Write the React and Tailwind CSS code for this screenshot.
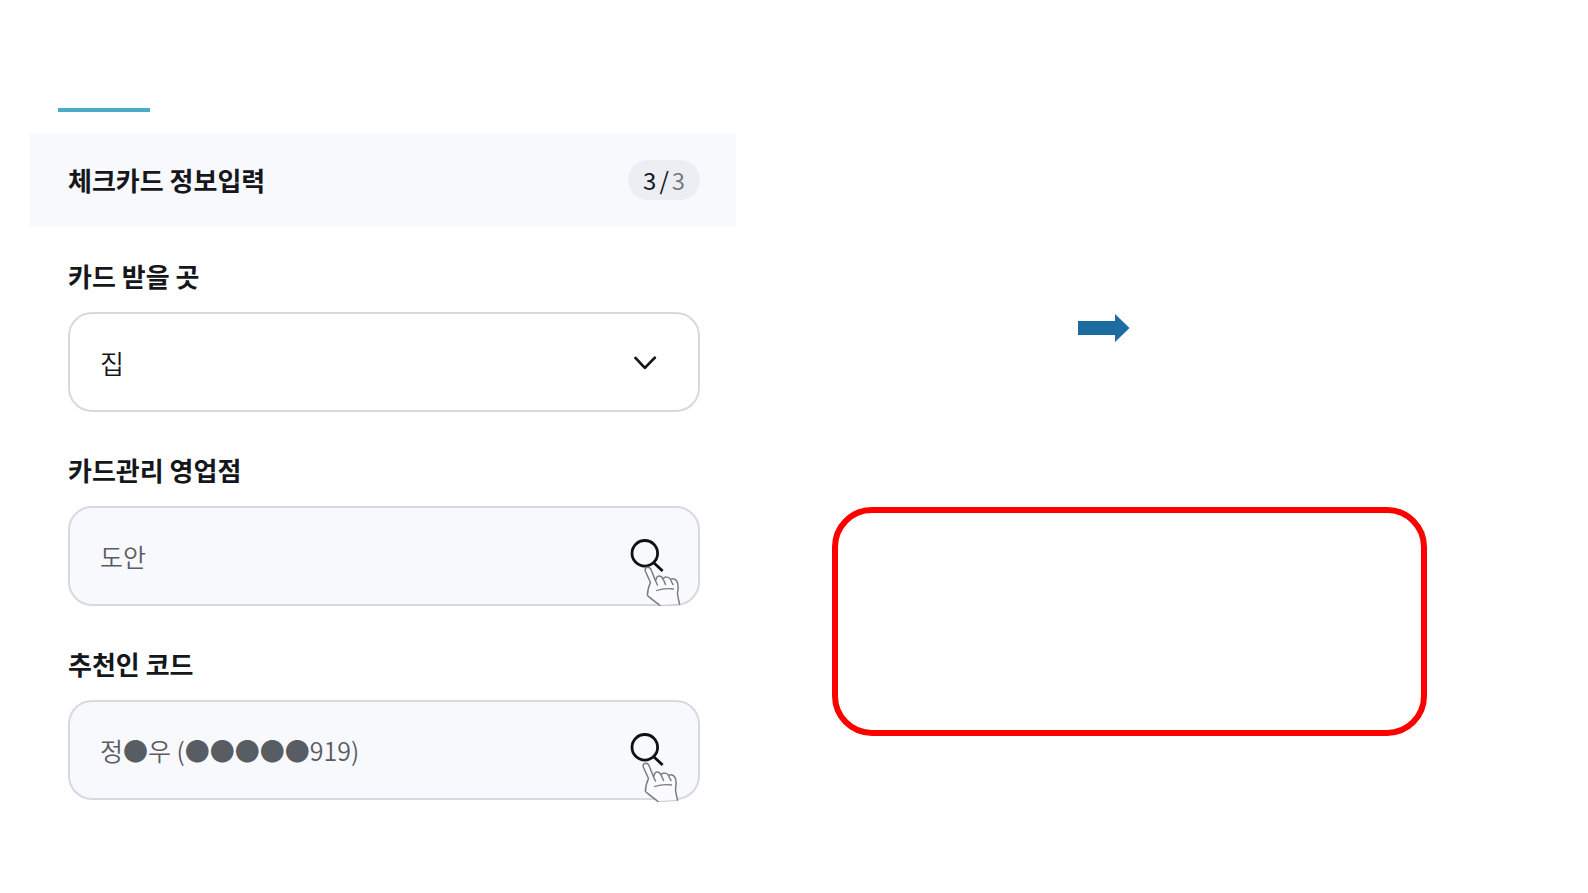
import React, { useState } from 'react';

const ChevronIcon = ({ className }) => (
  <svg className={className} width="24" height="14" viewBox="0 0 24 14" fill="none" aria-hidden="true">
    <path
      d="M2.5 2C6 5.2 9 9.6 12 11.8C14.6 9.2 18.4 5 21.8 1.8"
      stroke="#15171b"
      strokeWidth="2.7"
      strokeLinecap="round"
      strokeLinejoin="round"
    />
  </svg>
);

const SearchIcon = () => (
  <svg width="34" height="34" viewBox="0 0 34 34" fill="none" aria-hidden="true">
    <circle cx="14.8" cy="14.3" r="12.8" stroke="#0f1013" strokeWidth="2.8" />
    <path d="M23.8 23.8L32.6 32" stroke="#0f1013" strokeWidth="2.8" />
  </svg>
);

const HandIcon = ({ className }) => (
  <svg className={className} width="38" height="41" viewBox="0 0 38 41" fill="none" aria-hidden="true">
    <path
      d="M16 39.5C11 36 6.5 32 3.5 29C3.5 25 4.5 21 6.5 16.5L1.5 5.5C.5 2.5 2 1.3 4 1.3C5.7 1.3 6.8 2.8 7.5 4.8L12 15C13 10.5 14.5 9.5 17.5 10.5C19 11 19.5 12 20 13.5C21 10.8 25 10.5 27 13.5C28 12 31 12.5 33 15.5C35 18.5 33.5 25 33.5 28C34 32 35 35 35.5 38.5Z"
      fill="#fbfbfd"
    />
    <path
      d="M16 39.5C12 36 6.5 32.5 3.5 29.5C3.3 25 4.5 21 6.5 16.5L1.5 5.5C.5 2.5 2 1.3 4 1.3C5.7 1.3 6.8 2.8 7.5 4.8L11.8 15.5L13.5 19M11.8 14.5C12.5 10 14.5 9.5 17 10.5C19 11.5 20 15 21.5 18.5M19.5 12.5C20.5 10.5 25 10.5 26.5 13.5C27.5 15.5 28 17 29 18.5M27 13.3C28.5 12 31.5 13 33 15.5C35.3 19 33.5 25 33.5 28C34 32 35 35 35.5 38.2"
      stroke="#777c86"
      strokeWidth="1.5"
      strokeLinecap="round"
      strokeLinejoin="round"
    />
    <path d="M12.5 24.5C18 22.8 24 22.3 29.5 23" stroke="#777c86" strokeWidth="1.3" strokeLinecap="round" />
    <path d="M17 39.5L29 38.9L35 38.4" stroke="#c3c7ce" strokeWidth="1" />
  </svg>
);

const SearchField = ({ id, label, initialValue, handClass }) => {
  const [value, setValue] = useState(initialValue);

  return (
    <div>
      <label htmlFor={id} className="block text-[26px] leading-9 font-bold">
        {label}
      </label>
      <div className="relative mt-[18px] flex h-[100px] items-center rounded-3xl border-2 border-[#d6d9df] bg-[#f8f9fd] pr-[34px] pl-[30px]">
        <input
          id={id}
          type="text"
          value={value}
          onChange={(e) => setValue(e.target.value)}
          className="min-w-0 flex-1 bg-transparent text-[25px] leading-9 font-[350] text-[#585c63] outline-none"
        />
        <button type="button" aria-label={`${label} 검색`}>
          <SearchIcon />
        </button>
        <HandIcon className={handClass} />
      </div>
    </div>
  );
};

const CardForm = () => {
  const [place, setPlace] = useState('집');

  return (
    <section>
      {/* Accent line */}
      <div className="ml-7 h-1 w-[92px] bg-[#4bacc6]" />

      {/* Header */}
      <header className="mt-[21px] flex h-[94px] items-center justify-between bg-[#f8f9fd] pr-9 pl-[38px]">
        <h1 className="text-[26px] leading-9 font-bold">체크카드 정보입력</h1>
        <p className="flex h-10 items-center gap-[3px] rounded-full bg-[#ebeef2] px-[15px] text-2xl">
          <span>3</span>
          <span>/</span>
          <span className="font-[350] text-[#70747e]">3</span>
        </p>
      </header>

      {/* Fields */}
      <form className="flex flex-col gap-10 pt-[31px] pr-9 pl-[38px]" onSubmit={(e) => e.preventDefault()}>
        <div>
          <label htmlFor="place" className="block text-[26px] leading-9 font-bold">
            카드 받을 곳
          </label>
          <div className="relative mt-[18px]">
            <select
              id="place"
              value={place}
              onChange={(e) => setPlace(e.target.value)}
              className="block h-[100px] w-full appearance-none rounded-3xl border-2 border-[#d6d9df] bg-white pr-20 pl-[30px] text-[26px] font-[350] outline-none"
            >
              <option value="집">집</option>
            </select>
            <ChevronIcon className="pointer-events-none absolute top-11 right-[43px]" />
          </div>
        </div>
        <SearchField
          id="branch"
          label="카드관리 영업점"
          initialValue="도안"
          handClass="pointer-events-none absolute top-[58px] right-4"
        />
        <SearchField
          id="referrer"
          label="추천인 코드"
          initialValue="정●우 (●●●●●919)"
          handClass="pointer-events-none absolute top-[60px] right-[18px]"
        />
      </form>
    </section>
  );
};

export default function App() {
  return (
    <main className="grid min-h-screen grid-cols-[706fr_822fr] bg-white px-[30px] pt-[108px] font-['Noto_Sans_CJK_KR',sans-serif] text-[#15171b]">
      <CardForm />

      <section className="pr-[131px] pl-24">
        <svg className="mt-[206px] ml-[246px]" width="52" height="28" viewBox="0 0 52 28" aria-hidden="true">
          <path d="M0 7H37V0L51.5 14L37 28V21H0Z" fill="#1c6ca2" />
        </svg>
        <div className="mt-[165px] h-[229px] rounded-[40px] border-6 border-[#ff0000]" />
      </section>
    </main>
  );
}
